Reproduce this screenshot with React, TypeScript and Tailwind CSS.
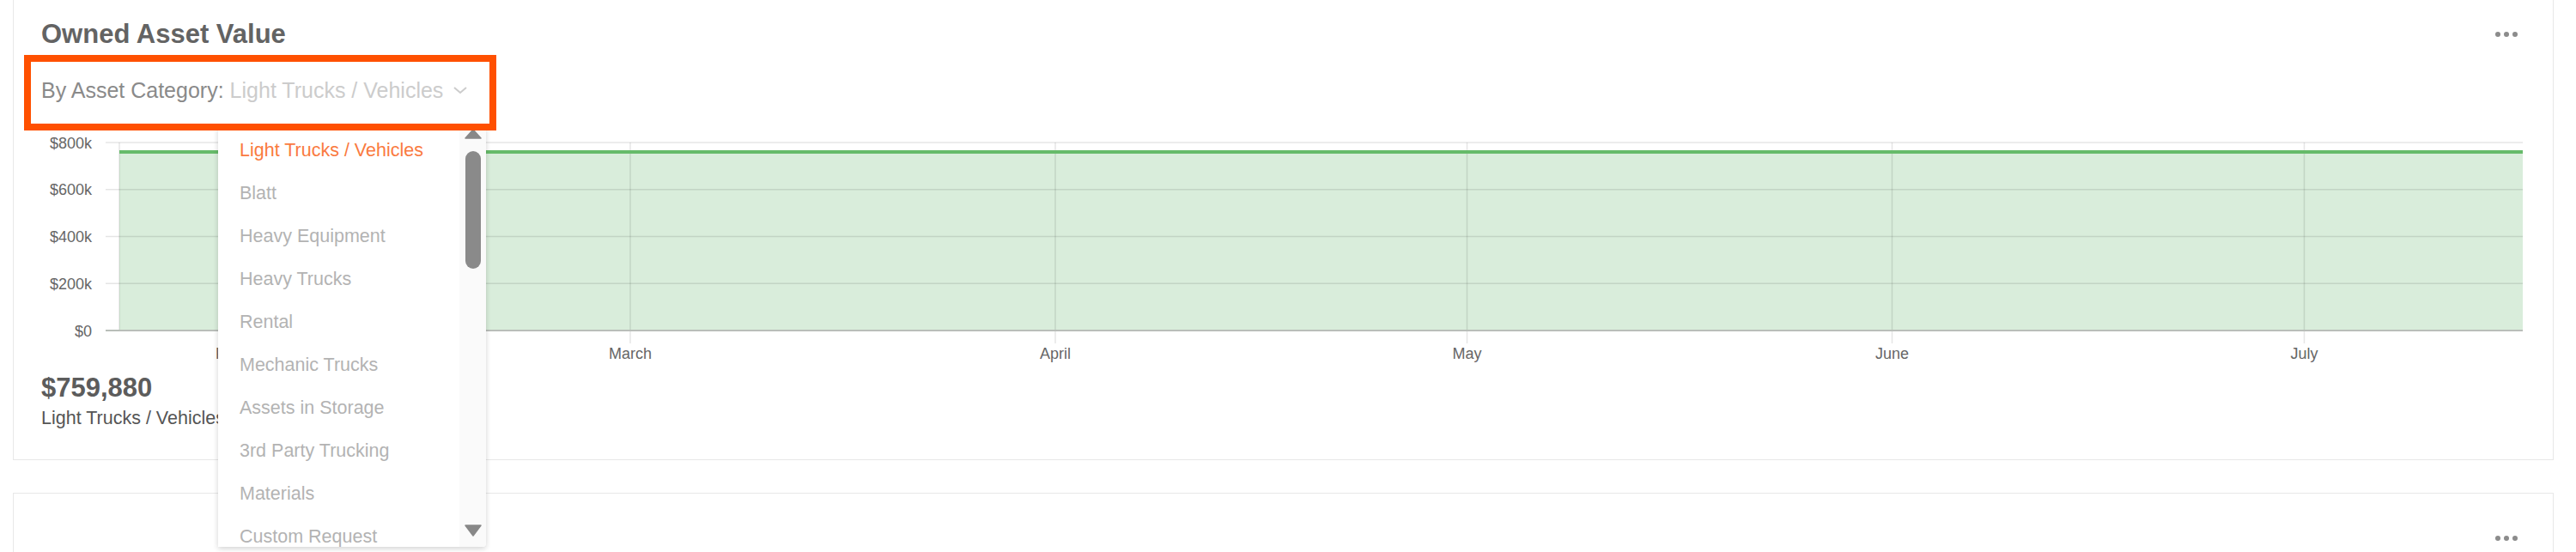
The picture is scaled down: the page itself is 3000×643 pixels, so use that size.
import React from 'react';

const FONT = { fontFamily: '"Liberation Sans", Arial, sans-serif' };

const categories = [
  'Light Trucks / Vehicles',
  'Blatt',
  'Heavy Equipment',
  'Heavy Trucks',
  'Rental',
  'Mechanic Trucks',
  'Assets in Storage',
  '3rd Party Trucking',
  'Materials',
  'Custom Request',
];

// y positions of the value gridlines, inside the chart svg
const yTicks = [
  { label: '$800k', y: 14 },
  { label: '$600k', y: 68.75 },
  { label: '$400k', y: 123.5 },
  { label: '$200k', y: 178.25 },
  { label: '$0', y: 233 },
];

const months = [
  { label: 'February', x: 271 },
  { label: 'March', x: 718 },
  { label: 'April', x: 1213 },
  { label: 'May', x: 1692.5 },
  { label: 'June', x: 2187.5 },
  { label: 'July', x: 2667.5 },
];

function Dots() {
  return (
    <div className="flex items-center gap-[4px]">
      <span className="w-[6px] h-[6px] rounded-full bg-[#8c8c8c]" />
      <span className="w-[6px] h-[6px] rounded-full bg-[#8c8c8c]" />
      <span className="w-[6px] h-[6px] rounded-full bg-[#8c8c8c]" />
    </div>
  );
}

function Chart() {
  const left = 123;
  const right = 2922;
  return (
    <svg width={2956} height={282} className="block" style={FONT}>
      <rect x={left} y={25} width={right - left} height={233 - 25} fill="#d9eddb" />
      {yTicks.map((t) => (
        <g key={t.label}>
          <line x1={107} x2={right} y1={t.y} y2={t.y} stroke="rgba(0,0,0,0.1)" strokeWidth={1.5} />
          <text x={91} y={t.y + 6.5} textAnchor="end" fontSize={18} fill="#666">
            {t.label}
          </text>
        </g>
      ))}
      <line x1={left} x2={left} y1={14} y2={233} stroke="rgba(0,0,0,0.1)" strokeWidth={1.5} />
      {months.map((m) => (
        <g key={m.label}>
          <line x1={m.x} x2={m.x} y1={14} y2={248} stroke="rgba(0,0,0,0.1)" strokeWidth={1.5} />
          <text x={m.x} y={266} textAnchor="middle" fontSize={18} fill="#666">
            {m.label}
          </text>
        </g>
      ))}
      <line x1={107} x2={right} y1={233} y2={233} stroke="#b9beb9" strokeWidth={2} />
      <line x1={left} x2={right} y1={25} y2={25} stroke="#66bb6a" strokeWidth={4} />
    </svg>
  );
}

function CategoryMenu() {
  return (
    <div className="absolute left-[254px] top-[148px] w-[312px] h-[489px] flex bg-white shadow-[0_2px_6px_rgba(0,0,0,0.18)] rounded-br-[4px] overflow-hidden z-0">
      <ul className="flex-1 pt-[2px]">
        {categories.map((c, i) => (
          <li
            key={c}
            className={`pl-[25px] leading-[50px] text-[21.5px] whitespace-nowrap ${
              i === 0 ? 'text-[#fa7a40]' : 'text-[#b3b3b3]'
            }`}
          >
            {c}
          </li>
        ))}
      </ul>
      <div className="w-[31px] bg-[#fafafa] flex flex-col items-center pt-[2px] pb-[12px]">
        <svg width={20} height={12} viewBox="0 0 20 12">
          <path d="M10 1 L19 11 L1 11 Z" fill="#888" stroke="#888" strokeWidth={1.5} strokeLinejoin="round" />
        </svg>
        <div className="mt-[14px] w-[18px] h-[137px] rounded-full bg-[#8a8a8a]" />
        <div className="flex-1" />
        <svg width={20} height={15} viewBox="0 0 20 15">
          <path d="M1 2 L19 2 L10 14 Z" fill="#888" stroke="#888" strokeWidth={1.5} strokeLinejoin="round" />
        </svg>
      </div>
    </div>
  );
}

export default function App() {
  return (
    <div className="relative h-[643px] overflow-hidden bg-white" style={FONT}>
      <div className="ml-[15px] w-[2959px] mt-[-14px] border border-[#e8e8e8] bg-white pt-[35px] pb-[35px]">
        <div className="flex items-center justify-between pl-[32px] pr-[41px] h-[36px]">
          <h1 className="text-[31px] leading-[36px] font-bold text-[#636363]">Owned Asset Value</h1>
          <Dots />
        </div>
        <div className="relative z-10 ml-[12px] mt-[6px] w-[550px] border-[8px] border-[#ff5000] pl-[12px] pt-[18px] pb-[24px]">
          <div className="flex items-center h-[30px] text-[25px] leading-[30px] whitespace-nowrap">
            <span className="text-[#8a8a8a]">By Asset Category:</span>
            <span className="ml-[7px] text-[#cccccc]">Light Trucks / Vehicles</span>
            <svg width={18} height={10} viewBox="0 0 18 10" className="ml-[11px]">
              <polyline points="2,2 9,8 16,2" fill="none" stroke="#cccccc" strokeWidth={2} />
            </svg>
          </div>
        </div>
        <Chart />
        <div className="pl-[32px]">
          <div className="text-[31px] leading-[36px] font-bold text-[#5c5c5c]">$759,880</div>
          <div className="mt-[4px] text-[21.5px] leading-[26px] text-[#555]">Light Trucks / Vehicles</div>
        </div>
      </div>

      <div className="ml-[15px] w-[2959px] mt-[38px] h-[200px] border border-[#e8e8e8] bg-white pt-[34px]">
        <div className="flex items-center justify-end pr-[41px] h-[36px]">
          <Dots />
        </div>
      </div>

      <CategoryMenu />
    </div>
  );
}
